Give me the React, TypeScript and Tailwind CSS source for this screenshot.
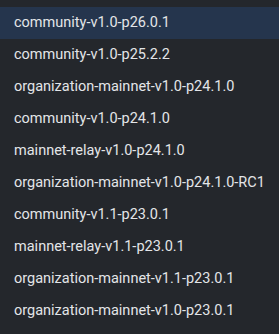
import React from 'react';

const versions = [
  'community-v1.0-p26.0.1',
  'community-v1.0-p25.2.2',
  'organization-mainnet-v1.0-p24.1.0',
  'community-v1.0-p24.1.0',
  'mainnet-relay-v1.0-p24.1.0',
  'organization-mainnet-v1.0-p24.1.0-RC1',
  'community-v1.1-p23.0.1',
  'mainnet-relay-v1.1-p23.0.1',
  'organization-mainnet-v1.1-p23.0.1',
  'organization-mainnet-v1.0-p23.0.1',
];

export default function App() {
  const [selected, setSelected] = React.useState(0);

  return (
    <div className="w-[279px] h-[334px] bg-[#24272c] pt-[7px] overflow-hidden font-['Roboto',sans-serif]">
      <ul>
        {versions.map((v, i) => (
          <li
            key={v}
            onClick={() => setSelected(i)}
            className={
              'h-8 flex items-center px-[14px] text-[14.5px] text-[#e3e5e8] cursor-pointer ' +
              (i === selected ? 'bg-[#25354d]' : '')
            }
          >
            {v}
          </li>
        ))}
      </ul>
    </div>
  );
}
